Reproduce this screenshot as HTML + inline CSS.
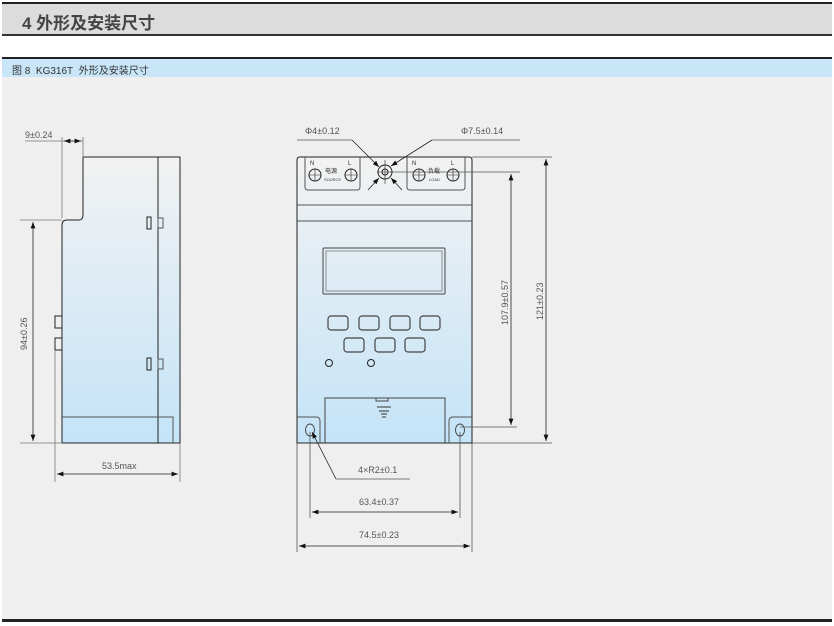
<!DOCTYPE html>
<html><head><meta charset="utf-8"><style>
body{margin:0;width:834px;height:626px;background:#fff;overflow:hidden;font-family:"Liberation Sans","Noto Sans CJK SC",sans-serif}
.hd{position:absolute;left:2px;top:2px;width:830px;height:30px;background:#dcdcdc;border-top:2px solid #222;border-bottom:2px solid #333}
.hd span{position:absolute;left:20px;top:5px;font-size:17px;font-weight:bold;color:#444}
.cap{position:absolute;left:2px;top:57px;width:830px;height:18px;background:#c8e6f8;border-top:2px solid #222;border-bottom:1px solid #777}
.cap span{position:absolute;left:10px;top:3px;font-size:10px;color:#333}
.fig{position:absolute;left:2px;top:77px;width:830px;height:542px;background:#efefef;border-bottom:3px solid #222}
svg{position:absolute;left:0;top:0}
text{font-family:"Liberation Sans","Noto Sans CJK SC",sans-serif;font-size:9px;fill:#555}
</style></head><body>
<div class="hd"><span>4 外形及安装尺寸</span></div>
<div class="cap"><span>图 8&nbsp; KG316T&nbsp; 外形及安装尺寸</span></div>
<div class="fig"></div>
<svg width="834" height="626" viewBox="0 0 834 626">
<defs><linearGradient id="g" x1="0" y1="0" x2="0" y2="1"><stop offset="0" stop-color="#f2f2f2"/><stop offset="1" stop-color="#c4e4f8"/></linearGradient>
<marker id="a" markerWidth="8" markerHeight="6" refX="8" refY="3" orient="auto-start-reverse"><path d="M0,0 L8,3 L0,6z" fill="#111"/></marker></defs>
<g stroke="#222" stroke-width="1" fill="none">
<path d="M83,157 L180,157 L180,443 L62,443 L62,225 Q62,220 67,220 L79,220 Q83,220 83,215 Z" fill="url(#g)"/>
<line x1="158" y1="157" x2="158" y2="443"/>
<path d="M62,417 L173,417 L173,443" stroke="#555"/>
<rect x="147" y="217" width="4" height="12"/><rect x="158" y="218" width="5" height="10" stroke="#555"/>
<rect x="147" y="358" width="4" height="12"/><rect x="158" y="359" width="5" height="10" stroke="#555"/>
<rect x="55" y="316" width="7" height="12"/><rect x="55" y="338" width="7" height="12"/>
</g>
<g stroke="#777" stroke-width="0.8" fill="none">
<line x1="62" y1="137" x2="62" y2="218"/><line x1="83" y1="137" x2="83" y2="157"/>
<line x1="25" y1="141" x2="83" y2="141"/>
<line x1="20" y1="220" x2="62" y2="220"/><line x1="20" y1="443" x2="62" y2="443"/>
<line x1="55" y1="350" x2="55" y2="482"/><line x1="180" y1="443" x2="180" y2="482"/>
</g>
<g stroke="#222" stroke-width="0.8">
<line x1="64" y1="141" x2="81" y2="141" marker-start="url(#a)" marker-end="url(#a)"/>
<line x1="33" y1="222" x2="33" y2="441" marker-start="url(#a)" marker-end="url(#a)"/>
<line x1="57" y1="474" x2="178" y2="474" marker-start="url(#a)" marker-end="url(#a)"/>
</g>
<text x="25" y="138">9±0.24</text>
<text x="0" y="0" transform="translate(27,350) rotate(-90)">94±0.26</text>
<text x="102" y="469">53.5max</text>
<g stroke="#222" stroke-width="1" fill="none">
<path d="M297,160 Q297,157 300,157 L469,157 Q472,157 472,160 L472,443 L297,443 Z" fill="url(#g)"/>
<line x1="297" y1="205" x2="472" y2="205" stroke="#555"/>
<line x1="297" y1="221" x2="472" y2="221" stroke="#555"/>
<path d="M305,157 L305,187 Q305,190 308,190 L357,190 Q360,190 360,187 L360,157" stroke="#555"/>
<path d="M407,157 L407,187 Q407,190 410,190 L462,190 Q465,190 465,187 L465,157" stroke="#555"/>
<circle cx="315" cy="175" r="6"/><path d="M309,175h12M315,169v12" stroke-width="0.6"/>
<circle cx="351" cy="175" r="6"/><path d="M345,175h12M351,169v12" stroke-width="0.6"/>
<circle cx="419" cy="175" r="6"/><path d="M413,175h12M419,169v12" stroke-width="0.6"/>
<circle cx="453" cy="175" r="6"/><path d="M447,175h12M453,169v12" stroke-width="0.6"/>
<circle cx="385" cy="172" r="7"/><circle cx="385" cy="172" r="3"/>
<path d="M377,172h16M385,160v24" stroke-width="0.6"/>
<rect x="323" y="248" width="122" height="46" rx="1" stroke="#444"/>
<rect x="326" y="251" width="116" height="40" stroke="#666" stroke-width="0.7"/>
<g stroke="#444" stroke-width="1.2">
<rect x="328" y="316" width="20" height="14" rx="3"/><rect x="359" y="316" width="20" height="14" rx="3"/>
<rect x="390" y="316" width="20" height="14" rx="3"/><rect x="420" y="316" width="20" height="14" rx="3"/>
<rect x="344" y="338" width="20" height="14" rx="3"/><rect x="375" y="338" width="20" height="14" rx="3"/>
<rect x="405" y="338" width="20" height="14" rx="3"/>
</g>
<circle cx="329" cy="363" r="3.5"/><circle cx="371" cy="363" r="3.5"/>
<path d="M325,443 L325,398 L445,398 L445,443" stroke="#444"/>
<path d="M376,398v3h12v-3" stroke="#444"/>
<path d="M377,407h14M379,411h10M381,414h6M382,417h4" stroke="#555" stroke-width="1.2"/>
<path d="M297,417 L316,417 Q320,417 320,421 L320,443" stroke="#555"/>
<path d="M472,417 L453,417 Q449,417 449,421 L449,443" stroke="#555"/>
<ellipse cx="310" cy="430" rx="4.5" ry="6" stroke="#444"/><ellipse cx="460" cy="430" rx="4.5" ry="6" stroke="#444"/>
</g>
<text x="310" y="165" style="font-size:6px;fill:#333">N</text><text x="348" y="165" style="font-size:6px;fill:#333">L</text>
<text x="412" y="165" style="font-size:6px;fill:#333">N</text><text x="451" y="165" style="font-size:6px;fill:#333">L</text>
<text x="325" y="173" style="font-size:6px;fill:#333">电源</text><text x="324" y="181" style="font-size:4px;fill:#333">SOURCE</text>
<text x="428" y="173" style="font-size:6px;fill:#333">负载</text><text x="429" y="181" style="font-size:4px;fill:#333">LOAD</text>
<g stroke="#555" stroke-width="0.8" fill="none">
<path d="M297,140 L352,140"/><path d="M520,140 L432,140"/>
<line x1="390" y1="172" x2="520" y2="172"/>
<line x1="472" y1="157" x2="552" y2="157"/><line x1="472" y1="443" x2="552" y2="443"/>
<line x1="460" y1="427" x2="517" y2="427"/>
<line x1="297" y1="443" x2="297" y2="552"/><line x1="472" y1="443" x2="472" y2="552"/>
<line x1="310" y1="432" x2="310" y2="518"/><line x1="460" y1="432" x2="460" y2="518"/>
<path d="M336,479 L410,479"/>
</g>
<g stroke="#222" stroke-width="0.8" fill="none">
<line x1="352" y1="140" x2="379" y2="167" marker-end="url(#a)"/>
<line x1="432" y1="140" x2="391" y2="166" marker-end="url(#a)"/>
<line x1="368" y1="190" x2="379" y2="178" marker-end="url(#a)"/>
<line x1="402" y1="190" x2="391" y2="178" marker-end="url(#a)"/>
<line x1="336" y1="479" x2="312" y2="432" marker-end="url(#a)"/>
<line x1="511" y1="174" x2="511" y2="425" marker-start="url(#a)" marker-end="url(#a)"/>
<line x1="546" y1="159" x2="546" y2="441" marker-start="url(#a)" marker-end="url(#a)"/>
<line x1="312" y1="512" x2="458" y2="512" marker-start="url(#a)" marker-end="url(#a)"/>
<line x1="299" y1="546" x2="470" y2="546" marker-start="url(#a)" marker-end="url(#a)"/>
</g>
<text x="305" y="134">Φ4±0.12</text>
<text x="461" y="134">Φ7.5±0.14</text>
<text x="0" y="0" transform="translate(508,325) rotate(-90)">107.9±0.57</text>
<text x="0" y="0" transform="translate(543,320) rotate(-90)">121±0.23</text>
<text x="358" y="473">4×R2±0.1</text>
<text x="359" y="505">63.4±0.37</text>
<text x="359" y="538">74.5±0.23</text>
</svg>
</body></html>
